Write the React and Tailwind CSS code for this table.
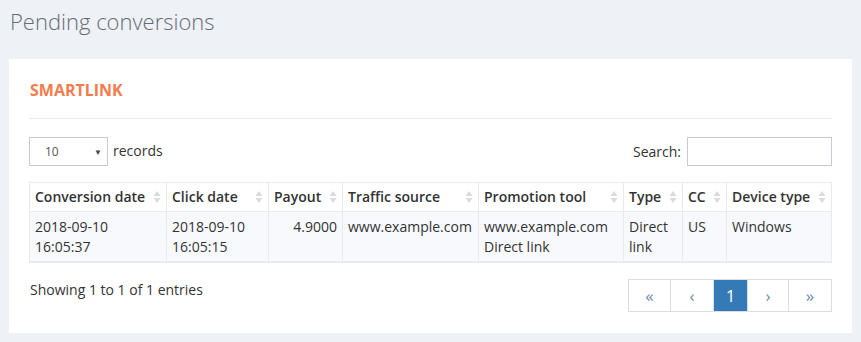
const columns = [
    { label: "Conversion date", width: "w-[137px]" },
    { label: "Click date", width: "w-[102px]" },
    { label: "Payout", width: "w-[74px]" },
    { label: "Traffic source", width: "w-[136px]" },
    { label: "Promotion tool", width: "w-[145px]" },
    { label: "Type", width: "w-[59px]" },
    { label: "CC", width: "w-[44px]" },
    { label: "Device type", width: "w-[105px]" },
];

function SortIcon() {
    return (
        <svg width="8" height="14" viewBox="0 0 8 14" className="shrink-0">
            <path d="M4 1 L7.5 6 L0.5 6 Z" fill="#d8dade" />
            <path d="M4 13 L7.5 8 L0.5 8 Z" fill="#d8dade" />
        </svg>
    );
}

function PageButton({ children, active, className = "" }) {
    return (
        <div
            className={`h-[33px] flex items-center justify-center border border-[#dddddd] -ml-px text-[17px] leading-none ${
                active ? "bg-[#337ab7] border-[#337ab7] text-white text-[14px]" : "bg-white text-[#6f8bab]"
            } ${className}`}
        >
            {children}
        </div>
    );
}

export default function App() {
    return (
        <div className="min-h-[342px] bg-[#eef1f6] pt-[5px] px-[9px] font-['Open_Sans',sans-serif] text-[#333]">
            {/* Page title */}
            <h1 className="text-[22px] font-light text-[#666c73] leading-[32px] pl-[1px]">Pending conversions</h1>

            <div className="mt-[22px] bg-white px-[20px] pt-[20px] pb-[21px]">
                {/* Card header */}
                <div className="pb-[17px] border-b border-[#e7e9ec]">
                    <h2 className="text-[16px] font-bold text-[#f47c4c] leading-[22px] pl-[1px]">SMARTLINK</h2>
                </div>

                {/* Length + search */}
                <div className="flex items-center justify-between mt-[18px]">
                    <div className="flex items-center gap-[5px] text-[14px]">
                        <div className="w-[79px] h-[29px] border border-[#c5cad3] flex items-center justify-between pl-[15px] pr-[5px] text-[12px] text-[#555]">
                            <span>10</span>
                            <span className="text-[8px] text-[#444]">▼</span>
                        </div>
                        <span className="-mt-[2px]">records</span>
                    </div>
                    <div className="flex items-center gap-[6px] text-[14px]">
                        <span>Search:</span>
                        <div className="w-[145px] h-[29px] border border-[#c5cad3]" />
                    </div>
                </div>

                {/* Table */}
                <table className="mt-[16px] w-[802px] table-fixed border-collapse text-[14px] leading-[20px]">
                    <thead>
                        <tr>
                            {columns.map((c) => (
                                <th
                                    key={c.label}
                                    className={`${c.width} border border-[#e7eaee] px-[5px] py-[4px] text-left font-semibold text-[#333]`}
                                >
                                    <div className="flex items-center justify-between gap-1">
                                        <span className="whitespace-nowrap">{c.label}</span>
                                        <SortIcon />
                                    </div>
                                </th>
                            ))}
                        </tr>
                    </thead>
                    <tbody>
                        <tr className="bg-[#f8f9fc] align-top border-b-2 border-[#e7eaee]">
                            <td className="border border-[#e7eaee] px-[5px] pt-[5px] pb-[4px]">2018-09-10<br />16:05:37</td>
                            <td className="border border-[#e7eaee] px-[5px] pt-[5px] pb-[4px]">2018-09-10<br />16:05:15</td>
                            <td className="border border-[#e7eaee] px-[5px] pt-[5px] pb-[4px] text-right">4.9000</td>
                            <td className="border border-[#e7eaee] px-[5px] pt-[5px] pb-[4px]">www.example.com</td>
                            <td className="border border-[#e7eaee] px-[5px] pt-[5px] pb-[4px]">www.example.com<br />Direct link</td>
                            <td className="border border-[#e7eaee] px-[5px] pt-[5px] pb-[4px]">Direct<br />link</td>
                            <td className="border border-[#e7eaee] px-[5px] pt-[5px] pb-[4px]">US</td>
                            <td className="border border-[#e7eaee] px-[5px] pt-[5px] pb-[4px]">Windows</td>
                        </tr>
                    </tbody>
                </table>

                {/* Footer */}
                <div className="flex items-start justify-between mt-[16px]">
                    <div className="text-[14px] pl-[1px]">Showing 1 to 1 of 1 entries</div>
                    <div className="flex">
                        <PageButton className="w-[43px] ml-0">«</PageButton>
                        <PageButton className="w-[44px]">‹</PageButton>
                        <PageButton active className="w-[35px]">1</PageButton>
                        <PageButton className="w-[42px]">›</PageButton>
                        <PageButton className="w-[44px]">»</PageButton>
                    </div>
                </div>
            </div>
        </div>
    );
}
